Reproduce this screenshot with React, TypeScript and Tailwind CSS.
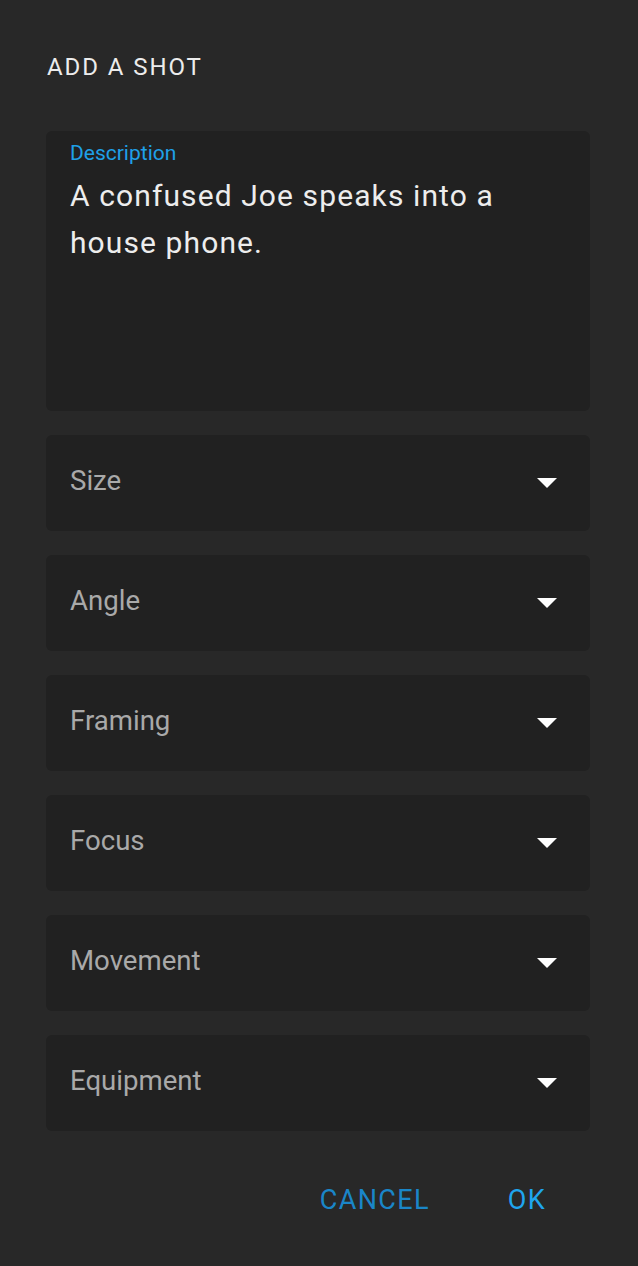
import React from "react";

const fields = ["Size", "Angle", "Framing", "Focus", "Movement", "Equipment"];

const Caret = () => (
  <svg width="20" height="10" viewBox="0 0 20 10" className="shrink-0 mr-[33px]">
    <path d="M0 0 L20 0 L10 10 Z" fill="#ffffff" />
  </svg>
);

const SelectField = ({ label }: { label: string }) => (
  <div className="flex h-[96px] items-center justify-between rounded-md bg-[#212121]">
    <span className="pb-[4px] pl-[24px] text-[27.6px] leading-[32px] text-[#a9a9a9]">{label}</span>
    <Caret />
  </div>
);

export default function App() {
  return (
    <div
      className="min-h-[1266px] w-full bg-[#282828] pl-[46px] pr-[48px] pt-[51px]"
      style={{ fontFamily: "Roboto, 'Noto Sans', sans-serif" }}
    >
      <h2 className="pl-px text-[24px] leading-[32px] tracking-[0.08em] text-[#ececec]">ADD A SHOT</h2>

      <div className="mt-[48px] h-[280px] rounded-md bg-[#212121] px-[24px]">
        <div className="pt-[10px] text-[21px] leading-[24px] text-[#1fa0e8]">Description</div>
        <p className="mt-[7px] text-[30px] leading-[47px] tracking-[1.1px] text-[#ededed]">
          A confused Joe speaks into a house phone.
        </p>
      </div>

      <div className="mt-[24px] flex flex-col gap-[24px]">
        {fields.map((f) => (
          <SelectField key={f} label={f} />
        ))}
      </div>

      <div className="mt-[53px] flex justify-end gap-[78px] pr-[44px]">
        <button className="text-[27px] leading-[32px] tracking-[0.05em] text-[#1a86c8]">CANCEL</button>
        <button className="text-[27px] leading-[32px] tracking-[0.05em] text-[#1fa5ee]">OK</button>
      </div>
    </div>
  );
}
